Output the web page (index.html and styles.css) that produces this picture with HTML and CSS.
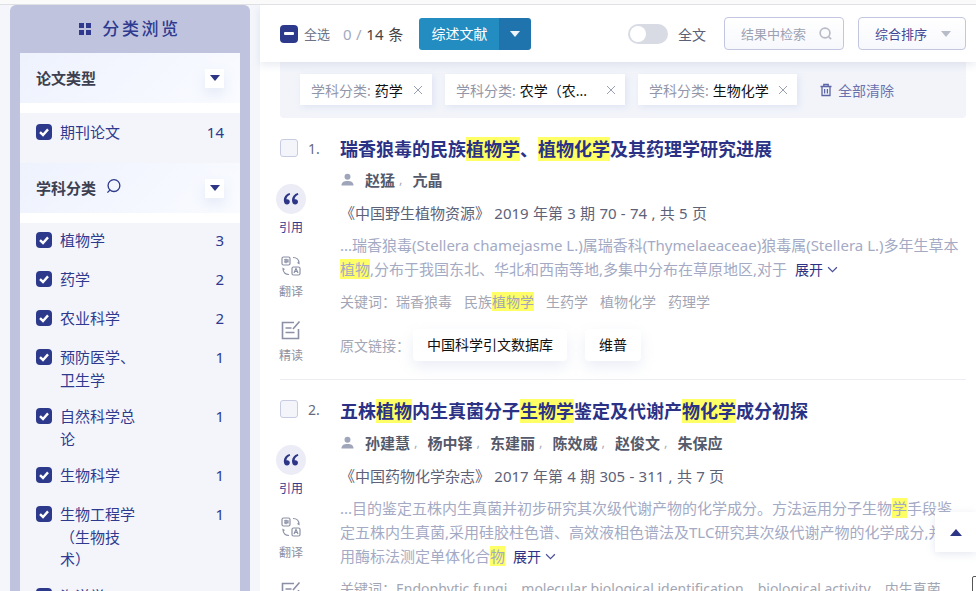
FILE: index.html
```html
<!DOCTYPE html>
<html lang="zh-CN">
<head>
<meta charset="utf-8">
<title>分类浏览</title>
<link rel="stylesheet" href="styles.css">
</head>
<body>
<div class="topline"></div>
<div class="page">
  <aside class="side">
    <div class="panel">
      <h2 class="panel-title"><svg class="grid-ico" viewBox="0 0 12 12"><rect width="5" height="5"/><rect x="7" width="5" height="5"/><rect y="7" width="5" height="5"/><rect x="7" y="7" width="5" height="5"/></svg><span>分类浏览</span></h2>
      <div class="inner">
        <div class="fhead"><b>论文类型</b><span class="drop"><i></i></span></div>
        <div class="gap"></div>
        <ul class="flist short">
          <li><span class="cb"><svg viewBox="0 0 16 16"><path d="M4 8.2l3 2.8 5-5.6"/></svg></span><span class="lab">期刊论文</span><span class="num">14</span></li>
        </ul>
        <div class="fhead"><b>学科分类</b><svg class="mag" viewBox="0 0 16 16"><circle cx="8.500" cy="7" r="6.300"/><path d="M4 12l-2.500 2.500"/></svg><span class="drop"><i></i></span></div>
        <div class="gap"></div>
        <ul class="flist">
          <li><span class="cb"><svg viewBox="0 0 16 16"><path d="M4 8.2l3 2.8 5-5.6"/></svg></span><span class="lab">植物学</span><span class="num">3</span></li>
          <li><span class="cb"><svg viewBox="0 0 16 16"><path d="M4 8.2l3 2.8 5-5.6"/></svg></span><span class="lab">药学</span><span class="num">2</span></li>
          <li><span class="cb"><svg viewBox="0 0 16 16"><path d="M4 8.2l3 2.8 5-5.6"/></svg></span><span class="lab">农业科学</span><span class="num">2</span></li>
          <li><span class="cb"><svg viewBox="0 0 16 16"><path d="M4 8.2l3 2.8 5-5.6"/></svg></span><span class="lab">预防医学、卫生学</span><span class="num">1</span></li>
          <li><span class="cb"><svg viewBox="0 0 16 16"><path d="M4 8.2l3 2.8 5-5.6"/></svg></span><span class="lab">自然科学总论</span><span class="num">1</span></li>
          <li><span class="cb"><svg viewBox="0 0 16 16"><path d="M4 8.2l3 2.8 5-5.6"/></svg></span><span class="lab">生物科学</span><span class="num">1</span></li>
          <li><span class="cb"><svg viewBox="0 0 16 16"><path d="M4 8.2l3 2.8 5-5.6"/></svg></span><span class="lab">生物工程学（生物技术）</span><span class="num">1</span></li>
          <li><span class="cb"><svg viewBox="0 0 16 16"><path d="M4 8.2l3 2.8 5-5.6"/></svg></span><span class="lab">海洋学</span><span class="num">1</span></li>
        </ul>
      </div>
    </div>
  </aside>
  <main class="main">
    <div class="toolbar">
      <span class="cb minus"><i></i></span>
      <span class="all">全选</span>
      <span class="count"><em>0 /</em> 14 条</span>
      <div class="split"><span class="split-l">综述文献</span><span class="split-r"><i></i></span></div>
      <span class="toggle"><i></i></span>
      <span class="full">全文</span>
      <div class="search"><span>结果中检索</span><svg viewBox="0 0 16 16"><circle cx="7.5" cy="7.5" r="5.2"/><path d="M11.5 11.5l2.5 2.5"/></svg></div>
      <div class="sort"><span>综合排序</span><i></i></div>
    </div>
    <div class="filters">
      <span class="chip c1"><span class="k">学科分类:</span><span class="v">药学</span><svg class="x" viewBox="0 0 10 10"><path d="M1 1l8 8M9 1l-8 8"/></svg></span>
      <span class="chip c2"><span class="k">学科分类:</span><span class="v">农学（农...</span><svg class="x" viewBox="0 0 10 10"><path d="M1 1l8 8M9 1l-8 8"/></svg></span>
      <span class="chip c3"><span class="k">学科分类:</span><span class="v">生物化学</span><svg class="x" viewBox="0 0 10 10"><path d="M1 1l8 8M9 1l-8 8"/></svg></span>
      <span class="clear"><svg viewBox="0 0 14 14"><path d="M1.5 3.5h11M4.8 3.5V1.5h4.4v2M3 3.5v9h8v-9M5.6 6v4.5M8.4 6v4.5"/></svg>全部清除</span>
    </div>

    <article class="item">
      <div class="gutter">
        <div class="pick"><span class="box"></span><span class="no">1.</span></div>
        <div class="tools">
          <span class="quote"><svg viewBox="0 0 16 12"><path d="M6.6 0C3 1.200.8 3.600.8 7c0 3 1.400 4.600 3.200 4.600 1.600 0 2.800-1.200 2.800-2.800S5.700 6.200 4.200 6.200c-.3 0-.6 0-.8.100C3.600 4.300 4.900 2.700 7.200 1.500zM14.800 0C11.200 1.200 9 3.600 9 7c0 3 1.400 4.600 3.200 4.600 1.600 0 2.800-1.200 2.800-2.800s-1.100-2.600-2.600-2.600c-.3 0-.6 0-.8.100.2-2 1.500-3.600 3.800-4.800z"/></svg></span>
          <span class="tl on">引用</span>
          <svg class="tico t1" viewBox="0 0 20 20"><rect x="1" y="1" width="8" height="8" rx="1.500"/><path d="M5 2.800v4.500M3 3.800h4v2H3"/><rect x="11" y="11" width="8" height="8" rx="1.500"/><path d="M13 17l2-4.500 2 4.500M13.800 15.500h2.400M12 1.500c3 0 6 1.500 6 6l-1.500-1M8 18.500c-3 0-6-1.500-6-6l1.500 1"/></svg>
          <span class="tl">翻译</span>
          <svg class="tico t2" viewBox="0 0 20 20"><path d="M13 2.500H1.500v16h16V9M4.500 8h6M4.500 12.500h9M12 9l6.500-7.500"/></svg>
          <span class="tl">精读</span>
        </div>
      </div>
      <div class="body">
        <h3 class="title">瑞香狼毒的民族<mark>植物学</mark>、<mark>植物化学</mark>及其药理学研究进展</h3>
        <div class="authors"><svg class="person" viewBox="0 0 14 14"><circle cx="7" cy="4" r="3.200"/><path d="M0.500 13.500c0-3.500 2.500-5 6.500-5s6.500 1.500 6.500 5z"/></svg><b>赵猛</b><i>,</i><b>亢晶</b></div>
        <p class="journal">《中国野生植物资源》 2019 年第 3 期 70 - 74 , 共 5 页</p>
        <p class="snip">...瑞香狼毒(Stellera chamejasme L.)属瑞香科(Thymelaeaceae)狼毒属(Stellera L.)多年生草本<br><mark>植物</mark>,分布于我国东北、华北和西南等地,多集中分布在草原地区,对于 <a class="more">展开<svg viewBox="0 0 10 6"><path d="M1 1l4 4 4-4"/></svg></a></p>
        <p class="kw">关键词：瑞香狼毒<span>民族<mark>植物学</mark></span><span>生药学</span><span>植物化学</span><span>药理学</span></p>
        <div class="links"><span class="ll">原文链接：</span><span class="lk">中国科学引文数据库</span><span class="lk">维普</span></div>
      </div>
    </article>

    <article class="item second">
      <div class="gutter">
        <div class="pick"><span class="box"></span><span class="no">2.</span></div>
        <div class="tools">
          <span class="quote"><svg viewBox="0 0 16 12"><path d="M6.6 0C3 1.200.8 3.600.8 7c0 3 1.400 4.600 3.200 4.600 1.600 0 2.800-1.200 2.800-2.800S5.700 6.200 4.200 6.200c-.3 0-.6 0-.8.100C3.600 4.300 4.900 2.700 7.200 1.500zM14.800 0C11.200 1.200 9 3.600 9 7c0 3 1.400 4.600 3.200 4.600 1.600 0 2.800-1.200 2.800-2.800s-1.100-2.600-2.600-2.600c-.3 0-.6 0-.8.100.2-2 1.500-3.600 3.800-4.800z"/></svg></span>
          <span class="tl on">引用</span>
          <svg class="tico t1" viewBox="0 0 20 20"><rect x="1" y="1" width="8" height="8" rx="1.500"/><path d="M5 2.800v4.500M3 3.800h4v2H3"/><rect x="11" y="11" width="8" height="8" rx="1.500"/><path d="M13 17l2-4.500 2 4.500M13.800 15.500h2.400M12 1.500c3 0 6 1.500 6 6l-1.500-1M8 18.500c-3 0-6-1.500-6-6l1.500 1"/></svg>
          <span class="tl">翻译</span>
          <svg class="tico t2" viewBox="0 0 20 20"><path d="M13 2.500H1.500v16h16V9M4.500 8h6M4.500 12.500h9M12 9l6.500-7.500"/></svg>
        </div>
      </div>
      <div class="body">
        <h3 class="title">五株<mark>植物</mark>内生真菌分子<mark>生物学</mark>鉴定及代谢产<mark>物化学</mark>成分初探</h3>
        <div class="authors"><svg class="person" viewBox="0 0 14 14"><circle cx="7" cy="4" r="3.200"/><path d="M0.500 13.500c0-3.500 2.500-5 6.500-5s6.500 1.500 6.500 5z"/></svg><b>孙建慧</b><i>,</i><b>杨中铎</b><i>,</i><b>东建丽</b><i>,</i><b>陈效威</b><i>,</i><b>赵俊文</b><i>,</i><b>朱保应</b></div>
        <p class="journal">《中国药物化学杂志》 2017 年第 4 期 305 - 311 , 共 7 页</p>
        <p class="snip">...目的鉴定五株内生真菌并初步研究其次级代谢产物的化学成分。方法运用分子生物<mark>学</mark>手段鉴<br>定五株内生真菌,采用硅胶柱色谱、高效液相色谱法及TLC研究其次级代谢产物的化学成分,并<br>用酶标法测定单体化合<mark>物</mark> <a class="more">展开<svg viewBox="0 0 10 6"><path d="M1 1l4 4 4-4"/></svg></a></p>
        <p class="kw">关键词：Endophytic fungi，molecular biological identification，biological activity，内生真菌</p>
      </div>
    </article>
  </main>
</div>
<button class="totop" type="button" aria-label="top"><i></i></button>
<span class="corner"></span>
</body>
</html>
```

FILE: styles.css
```css
* { box-sizing: border-box; }
html, body { margin: 0; height: 591px; overflow: hidden; }
body { background: #fff; font-family: "Noto Sans", "Noto Sans CJK SC", sans-serif; font-size: 14px; color: #333; }
ul { list-style: none; margin: 0; padding: 0; }
p, h2, h3 { margin: 0; }
i, em { font-style: normal; }
mark { background: #ffff66; color: inherit; }

.topline { height: 5px; background: #fafafa; border-bottom: 1px solid #dfe0e4; }
.page { display: flex; height: 586px; overflow: hidden; }

/* sidebar */
.side { width: 260px; flex: none; background: #f4f6fb; padding: 0 10px; }
.panel { background: #bfc3de; border-radius: 6px 6px 0 0; padding: 0 10px; height: 700px; }
.panel-title { height: 48px; display: flex; align-items: center; justify-content: center; gap: 11px; font-size: 17px; font-weight: 500; line-height: 48px; letter-spacing: 2.600px; color: #2f3a8f; }
.grid-ico { width: 12px; height: 12px; fill: #2f3a8f; }
.inner { background: #fff; }
.fhead { height: 50px; display: flex; align-items: center; padding: 0 16px; background: linear-gradient(135deg, #eef2fd, #f9fbff); color: #3d4050; font-size: 15px; }
.fhead b { font-weight: 700; margin-top: -2px; }
.mag { width: 15px; height: 15px; margin-left: 10px; margin-top: -4px; fill: none; stroke: #2d3a8c; stroke-width: 1.400; }
.drop { margin-left: auto; width: 19px; height: 19px; background: #fff; display: flex; align-items: center; justify-content: center; box-shadow: 0 6px 12px rgba(180, 190, 225, .25); }
.drop i { border: 5px solid transparent; border-top: 6px solid #2d3586; border-bottom: 0; width: 0; height: 0; }
.gap { height: 10px; background: #fff; }
.flist { background: #f3f5fb; padding: 6px 16px 0; }
.flist.short { padding: 8px 16px 3px; }
.flist li { display: flex; align-items: flex-start; line-height: 22.500px; min-height: 39px; padding-bottom: 14px; color: #2f3a8f; font-size: 15px; }
.cb { width: 16px; height: 16px; background: #2d3a8c; border-radius: 4px; flex: none; margin-top: 3px; display: block; }
.cb svg { display: block; width: 16px; height: 16px; fill: none; stroke: #fff; stroke-width: 2.400; }
.lab { width: 75px; margin-left: 8px; }
.num { margin-left: auto; font-size: 15px; }

/* main */
.main { flex: 1; min-width: 0; background: #fff; position: relative; }
.toolbar { height: 57px; display: flex; align-items: center; padding: 0 10px 0 20px; background: #fff; box-shadow: 0 3px 8px rgba(150, 160, 190, .22); position: relative; z-index: 2; }
.cb.minus { margin: 0; width: 18px; height: 18px; display: flex; align-items: center; justify-content: center; }
.minus i { width: 10px; height: 3px; border-radius: 1px; background: #fff; }
.all { margin-left: 6px; font-size: 13px; color: #6d7285; }
.count { margin-left: 13px; font-size: 15px; letter-spacing: .3px; color: #444; }
.count em { color: #a4a9c0; }
.split { margin-left: 16px; width: 112px; height: 32px; display: flex; border-radius: 3px; overflow: hidden; color: #fff; }
.split-l { width: 80px; background: #238cc0; text-align: center; line-height: 32px; font-size: 14px; }
.split-r { width: 32px; background: #2074ae; display: flex; align-items: center; justify-content: center; }
.split-r i { border: 5px solid transparent; border-top: 6px solid #eef4fa; border-bottom: 0; }
.toggle { margin-left: auto; width: 40px; height: 20px; border-radius: 10px; background: #d8dbe4; padding: 2px; }
.toggle i { display: block; width: 16px; height: 16px; border-radius: 50%; background: #fff; }
.full { margin-left: 10px; font-size: 14px; color: #5a6075; }
.search, .sort { height: 33px; border: 1px solid #c3c6e0; border-radius: 4px; display: flex; align-items: center; font-size: 13px; background: linear-gradient(#fff, #f7f8fc); }
.search { margin-left: 18px; width: 120px; padding: 0 10px 0 16px; color: #9da1b2; justify-content: space-between; }
.search svg { width: 15px; height: 15px; fill: none; stroke: #b8bcc6; stroke-width: 1.800; }
.sort { margin-left: 14px; width: 108px; padding: 0 14px 0 16px; color: #3f4795; justify-content: space-between; }
.sort i { border: 5px solid transparent; border-top: 6px solid #b8bcc8; border-bottom: 0; }

.filters { margin: 0 10px 0 20px; height: 56px; padding: 12px 19px 0 20px; background: #f2f4fa; border-radius: 0 0 4px 4px; display: flex; align-items: flex-start; }
.chip { height: 31px; background: #fff; display: flex; align-items: center; padding: 0 9px 0 11px; box-shadow: 2px 2px 6px rgba(190, 200, 230, .35); font-size: 14px; margin-right: 13px; white-space: nowrap; }
.chip.c1 { width: 132px; }
.chip.c2 { width: 180px; }
.chip.c3 { width: 159px; margin-right: 22px; }
.k { color: #9296a8; }
.v { color: #111; margin-left: 4px; }
.x { width: 10px; height: 10px; margin-left: auto; fill: none; stroke: #9aa0b2; stroke-width: 1; }
.clear { display: flex; align-items: center; height: 31px; color: #6a72ad; font-size: 14px; gap: 5px; }
.clear svg { width: 14px; height: 14px; fill: none; stroke: #5b64a5; stroke-width: 1.300; }

.item { margin: 0 10px 0 20px; display: flex; height: 262px; padding-top: 15px; border-bottom: 1px solid #eceef4; }
.item.second { border: 0; padding-top: 14px; }
.gutter { width: 60px; flex: none; }
.pick { display: flex; align-items: center; height: 30px; }
.box { width: 18px; height: 18px; border: 1px solid #c8cce2; border-radius: 3px; background: #f4f5fb; }
.no { margin-left: 10px; font-size: 14px; color: #666b7c; }
.tools { width: 30px; margin: 21px 0 0 -4px; display: flex; flex-direction: column; align-items: center; }
.quote { width: 30px; height: 30px; border-radius: 50%; background: #ebecf6; display: flex; align-items: center; justify-content: center; flex: none; }
.quote svg { width: 16px; height: 12px; fill: #2d3586; }
.tl { font-size: 12px; line-height: 18px; color: #8c90a2; white-space: nowrap; margin-top: 7px; }
.tl.on { color: #2f3a8f; margin-top: 5px; }
.tico { width: 20px; height: 20px; fill: none; stroke: #8b90a6; stroke-width: 1.200; margin-top: 19px; flex: none; }
.t2 { stroke-width: 1.600; }
.body { flex: 1; min-width: 0; }
.title { font-size: 18px; line-height: 24px; font-weight: 700; color: #2b3285; white-space: nowrap; margin-top: 4px; }
.second .title { margin-top: 5px; }
.authors { display: flex; align-items: center; height: 24px; margin-top: 6px; font-size: 15px; color: #555a6b; white-space: nowrap; }
.second .authors { margin-top: 7px; }
.authors b { font-weight: 700; }
.authors i { color: #a9adbc; margin: 0 10px 0 4px; font-size: 13px; }
.person { width: 13px; height: 13px; fill: #a0a6ba; margin: 0 11px 0 1px; }
.journal { margin-top: 10px; line-height: 24px; font-size: 15px; word-spacing: .4px; color: #5d6278; white-space: nowrap; }
.snip { margin-top: 8px; font-size: 15px; line-height: 24px; color: #a4aac4; white-space: nowrap; }
.more { color: #2b3285; font-size: 14px; margin-left: 4px; }
.more svg { width: 11px; height: 7px; margin-left: 4px; vertical-align: 2px; fill: none; stroke: #4a5199; stroke-width: 1.100; }
.kw { margin-top: 8px; font-size: 14px; line-height: 24px; color: #a3a6b4; white-space: nowrap; }
.kw span { margin-left: 12px; }
.links { display: flex; align-items: center; height: 32px; margin-top: 15px; font-size: 14px; color: #a3a6b4; }
.ll { width: 73px; }
.lk { height: 32px; line-height: 32px; padding: 0 14px; margin-right: 18px; background: #fff; color: #111; border-radius: 4px; box-shadow: 0 6px 14px rgba(190, 198, 225, .3); }

.totop { position: absolute; right: 0; top: 512px; width: 41px; height: 40px; border: 0; padding: 0; background: #fff; box-shadow: 0 2px 8px rgba(170, 180, 210, .3); display: flex; align-items: center; justify-content: center; }
.totop i { border: 6px solid transparent; border-bottom: 7px solid #2d3586; border-top: 0; }
.corner { position: absolute; right: -4px; top: 576px; width: 8px; height: 20px; border: 1px solid #555; border-radius: 2px; background: #fff; }
```
